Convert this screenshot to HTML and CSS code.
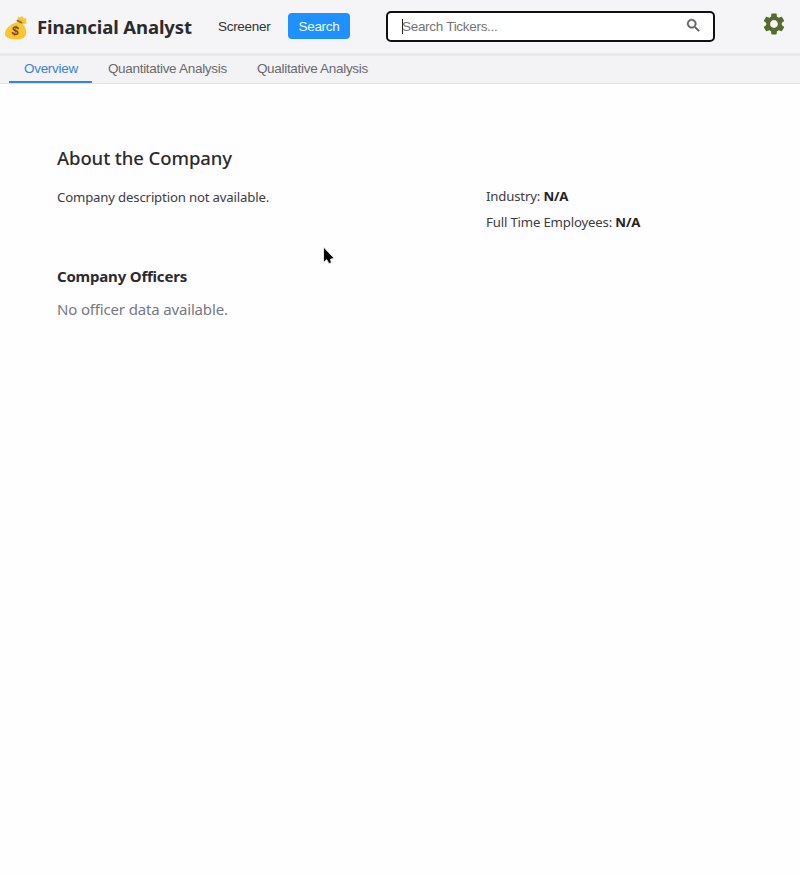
FILE: index.html
```html
<!DOCTYPE html>
<html lang="en">
<head>
<meta charset="utf-8">
<title>Financial Analyst</title>
<link rel="stylesheet" href="styles.css">
</head>
<body>
<header class="topbar">
  <svg class="logo" viewBox="0 0 24 26" aria-hidden="true">
    <path fill="#f8c62f" d="M14 2.5l2 1.1 2.2-1.6 1.5 2.3 3 .2-.8 2.7 1 2-4 1.4c3 3 4 6.500 3 9.800C20.800 24 17.500 25.300 12 25.300 5 25.300 1 23.500 1 19.800 1 14.500 6.500 9.700 13.200 8.200z"/>
    <path d="M13.400 6.600l4.200 2" stroke="#86704d" stroke-width="1.800" stroke-linecap="round"/>
    <text x="11.200" y="21.200" text-anchor="middle" class="dollar" transform="rotate(10 11 17)">$</text>
  </svg>
  <h1 class="brand">Financial Analyst</h1>
  <a class="nav-link">Screener</a>
  <button class="nav-button">Search</button>
  <div class="search-box">
    <span class="caret"></span>
    <span class="placeholder">Search Tickers...</span>
    <svg class="search-icon" viewBox="0 0 24 24"><path fill="#606060" stroke="#606060" stroke-width=".7" d="M15.500 14h-.79l-.28-.27C15.410 12.590 16 11.110 16 9.500 16 5.910 13.090 3 9.500 3S3 5.910 3 9.500 5.910 16 9.500 16c1.610 0 3.090-.59 4.230-1.570l.27.28v.79l5 4.990L20.490 19l-4.990-5zm-6 0C7.010 14 5 11.990 5 9.500S7.010 5 9.500 5 14 7.010 14 9.500 11.990 14 9.500 14z"/></svg>
  </div>
  <svg class="gear" viewBox="0 0 24 24"><path fill="#556b2f" d="M19.140 12.940c.04-.3.06-.61.06-.94 0-.32-.02-.64-.07-.94l2.030-1.580c.18-.14.23-.41.12-.61l-1.920-3.320c-.12-.22-.37-.29-.59-.22l-2.390.96c-.5-.38-1.030-.7-1.620-.94l-.36-2.540c-.04-.24-.24-.41-.48-.41h-3.840c-.24 0-.43.17-.47.41l-.36 2.540c-.59.24-1.130.57-1.620.94l-2.390-.96c-.22-.08-.47 0-.59.22L2.740 8.870c-.12.21-.08.47.12.61l2.030 1.580c-.05.3-.09.63-.09.94s.02.64.07.94l-2.030 1.580c-.18.14-.23.41-.12.61l1.920 3.320c.12.22.37.29.59.22l2.390-.96c.5.38 1.030.7 1.620.94l.36 2.540c.05.24.24.41.48.41h3.840c.24 0 .44-.17.47-.41l.36-2.540c.59-.24 1.130-.56 1.620-.94l2.390.96c.22.08.47 0 .59-.22l1.920-3.320c.12-.22.07-.47-.12-.61l-2.010-1.580zM12 15.600c-1.980 0-3.600-1.620-3.600-3.600s1.620-3.600 3.600-3.600 3.600 1.620 3.600 3.600-1.620 3.600-3.600 3.600z"/></svg>
</header>
<nav class="tabs">
  <a class="tab active">Overview</a>
  <a class="tab">Quantitative Analysis</a>
  <a class="tab">Qualitative Analysis</a>
</nav>
<main class="content">
  <h2 class="section-title">About the Company</h2>
  <div class="about">
    <p class="description">Company description not available.</p>
    <div class="facts">
      <p>Industry: <strong>N/A</strong></p>
      <p>Full Time Employees: <strong>N/A</strong></p>
    </div>
  </div>
  <h3 class="officers-title">Company Officers</h3>
  <p class="empty">No officer data available.</p>
</main>
<svg class="cursor" viewBox="0 0 14 20"><path fill="#000" stroke="#fff" stroke-width=".8" d="M1.500 1v15.500l3.300-2.800 2 3.800 2.600-.6-.9-3.700 3.700-.9z"/></svg>
</body>
</html>
```

FILE: styles.css
```css
* { box-sizing: border-box; }
body {
  margin: 0;
  height: 875px;
  overflow: hidden;
  background: #fefdff;
  color: #2b2b2e;
  font-family: "Noto Sans", sans-serif;
}
h1, h2, h3, p { margin: 0; }
.topbar {
  display: flex;
  align-items: flex-start;
  height: 56px;
  padding-left: 4px;
  background: #f5f4f6;
  border-bottom: 3px solid #e9e8eb;
}
.logo { width: 24px; height: 26px; margin-top: 14px; }
.dollar { font: bold 13px "Liberation Sans", sans-serif; fill: #80431f; }
.brand {
  width: 181px;
  margin-left: 9px;
  font-size: 18.500px;
  line-height: 25px;
  margin-top: 14px;
  font-weight: 700;
  letter-spacing: -.1px;
  white-space: nowrap;
}
.nav-link, .nav-button, .placeholder, .tab {
  font-family: "Liberation Sans", sans-serif;
  font-size: 13.500px;
  letter-spacing: -.3px;
}
.nav-link { width: 70px; margin-top: 18px; line-height: 18px; color: #333; }
.nav-button {
  width: 62px;
  height: 26px;
  margin: 13px 1px 0 0;
  padding: 0;
  border: 0;
  border-radius: 4px;
  background: #1e90ff;
  color: #f2fcff;
}
.search-box {
  display: flex;
  align-items: center;
  width: 329px;
  height: 31px;
  margin: 11px 0 0 35px;
  padding: 0 11px 0 14px;
  border: 2px solid #101010;
  border-radius: 5px;
  background: #fff;
}
.caret { width: 1px; height: 15px; margin-right: -1px; background: #222; }
.placeholder { color: #757575; }
.search-icon { width: 17px; height: 17px; margin-left: auto; margin-top: -2px; }
.gear { width: 26px; height: 26px; margin: 11px 0 0 46px; }
.tabs {
  display: flex;
  height: 28px;
  padding-left: 9px;
  background: #f3f2f5;
  border-bottom: 1px solid #e3e2e5;
}
.tab {
  padding: 4px 15px 0;
  line-height: 18px;
  color: #6a6a6e;
}
.active { padding: 4px 14px 0 15px; margin-right: 1px; color: #3b82db; border-bottom: 2px solid #3b82db; }
.content { padding: 59px 57px 0; }
.section-title { font-size: 18.500px; line-height: 30px; font-weight: 500; letter-spacing: -.09px; }
.about { display: flex; margin-top: 10px; height: 81px; font-size: 13.200px; line-height: 26px; letter-spacing: -.17px; color: #3c3c42; }
.description { width: 429px; margin-top: 1px; }
.facts strong { color: #242428; font-weight: 700; }
.officers-title { font-size: 15px; line-height: 25px; font-weight: 700; letter-spacing: -.2px; }
.empty { margin-top: 8px; font-size: 15px; line-height: 24px; letter-spacing: -.16px; color: #78787f; }
.cursor { position: absolute; left: 322px; top: 246px; width: 14px; height: 20px; }
```
